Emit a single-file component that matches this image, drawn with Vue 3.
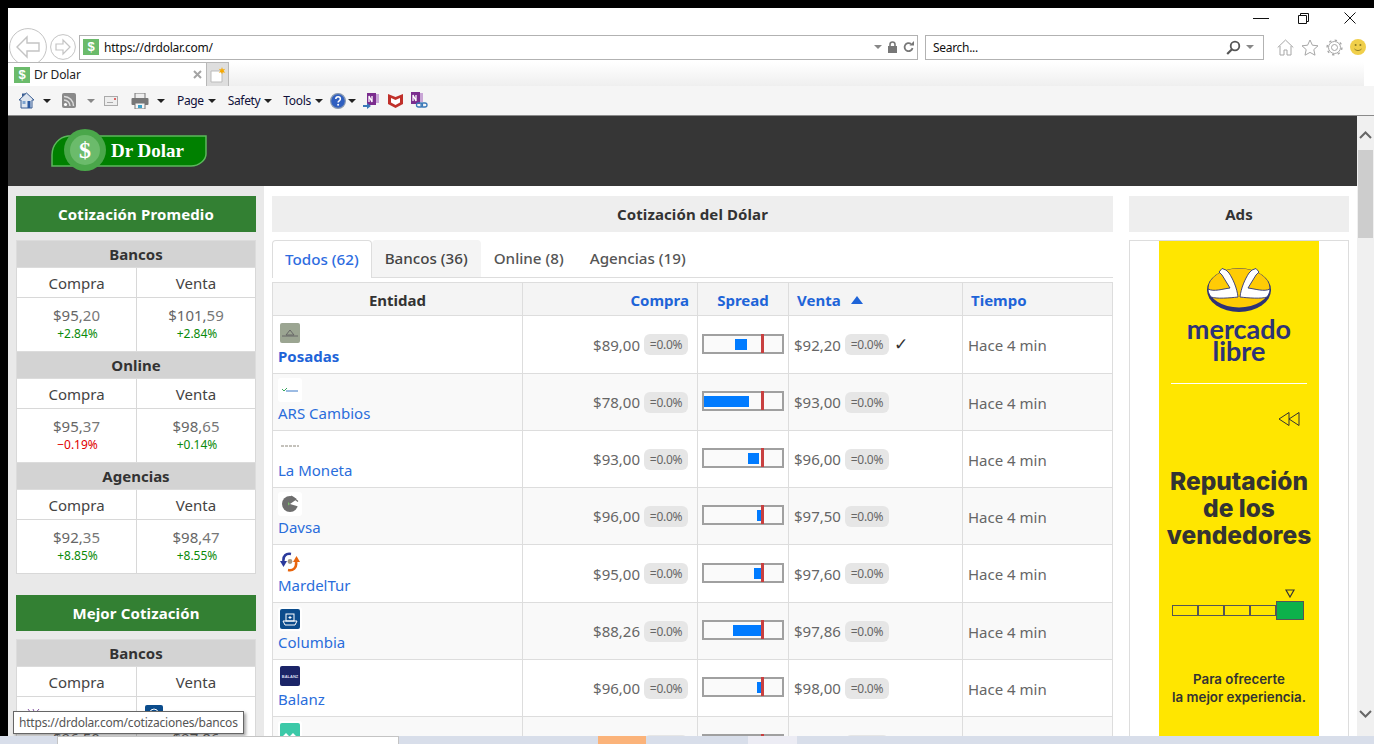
<template>
  <div class="screen">
    <div class="topbar"></div>
    <div class="desk">
      <div class="edge"></div>
      <div class="win">
        <!-- ventana del navegador -->
        <div class="titlebar">
          <span class="min"></span>
          <svg class="restore" width="11" height="11" viewBox="0 0 11 11"><path d="M2.5 2.5V.5h8v8h-2M.5 2.5h8v8h-8z" fill="#fff" stroke="#111"/></svg>
          <svg class="close" width="12" height="12" viewBox="0 0 12 12"><path d="M.5.5l11 11M11.5.5l-11 11" stroke="#111" fill="none"/></svg>
        </div>

        <div class="addr-row">
          <svg class="back" width="38" height="38" viewBox="0 0 38 38"><circle cx="19" cy="19" r="18.4" fill="#fff" stroke="#c4c4c4"/><path d="M8 19l10-10v6h12v8H18v6z" fill="#fff" stroke="#c4c4c4" stroke-width="1.4"/></svg>
          <svg class="fwd" width="26" height="26" viewBox="0 0 26 26"><circle cx="13" cy="13" r="12.4" fill="#fff" stroke="#c4c4c4"/><path d="M20 13l-7-7v4H6v6h7v4z" fill="#fff" stroke="#c4c4c4" stroke-width="1.2"/></svg>
          <div class="addr">
            <span class="fav">$</span>
            <span class="url">https://drdolar.com/</span>
            <i class="tri gray"></i>
            <svg width="11" height="12" viewBox="0 0 11 12"><path d="M3 5V3.5a2.5 2.5 0 015 0V5" fill="none" stroke="#777" stroke-width="1.6"/><rect x="1" y="5" width="9" height="7" fill="#777"/></svg>
            <svg width="11" height="12" viewBox="0 0 11 12"><path d="M9.5 7a4 4 0 11-1.4-4" fill="none" stroke="#777" stroke-width="1.8"/><path d="M6.5 4.5H11V0z" fill="#777"/></svg>
          </div>
          <div class="search">
            <span class="search-txt">Search...</span>
            <svg width="15" height="15" viewBox="0 0 15 15"><circle cx="9" cy="6" r="4.3" fill="none" stroke="#555" stroke-width="1.8"/><path d="M6 9.2L1.2 14" stroke="#555" stroke-width="2.2"/></svg>
            <i class="tri gray"></i>
          </div>
          <div class="ie-icons">
            <svg width="17" height="17" viewBox="0 0 17 17"><path d="M.7 8.5L8.5 1l7.8 7.5M3 7v9h4v-5h3v5h4V7" fill="none" stroke="#a6a6a6"/></svg>
            <svg width="18" height="17" viewBox="0 0 18 17"><path d="M9 1l2.4 5.2 5.6.6-4.2 3.8 1.2 5.6L9 13.4l-5 2.8 1.2-5.6L1 6.8l5.6-.6z" fill="none" stroke="#a6a6a6"/></svg>
            <svg width="17" height="17" viewBox="0 0 17 17"><circle cx="8.5" cy="8.5" r="3" fill="none" stroke="#a6a6a6"/><circle cx="8.5" cy="8.5" r="6" fill="none" stroke="#a6a6a6" stroke-width="1"/><circle cx="8.5" cy="8.5" r="7.4" fill="none" stroke="#a6a6a6" stroke-width="1.4" stroke-dasharray="2.4 3.4"/></svg>
            <svg width="16" height="16" viewBox="0 0 16 16"><circle cx="8" cy="8" r="8" fill="#f0cf4a"/><circle cx="5.6" cy="6" r="1" fill="#8a7a20"/><circle cx="10.4" cy="6" r="1" fill="#8a7a20"/><path d="M4.5 10c2 2 5 2 7 0" fill="none" stroke="#8a7a20"/></svg>
          </div>
        </div>

        <div class="tab-row">
          <div class="ie-tab">
            <span class="fav">$</span>
            <span class="ie-tab-name">Dr Dolar</span>
            <svg width="9" height="9" viewBox="0 0 9 9"><path d="M1 1l7 7M8 1L1 8" stroke="#a4a4a4" stroke-width="2"/></svg>
          </div>
          <div class="new-tab">
            <svg width="16" height="16" viewBox="0 0 16 16"><path d="M1 4h9l2 2v9H1z" fill="#fff" stroke="#bbb"/><path d="M12 0l.8 2.4 2.4-.6-1.6 2 1.6 2-2.4-.6-.8 2.4-.8-2.4-2.4.6 1.6-2-1.6-2 2.4.6z" fill="#f6a800"/></svg>
          </div>
        </div>

        <div class="cmd-bar">
          <svg class="c-home" width="17" height="17" viewBox="0 0 17 17"><path d="M1 8l7.5-7L16 8h-2v8H3V8z" fill="#dfe6ef" stroke="#3b5f94"/><path d="M8.5 1L4 5V1.5h2z" fill="#3b5f94"/><rect x="9.500" y="9" width="3" height="7" fill="#2c5aa0"/><rect x="4.500" y="9" width="3" height="3" fill="#7da3cf"/></svg>
          <i class="tri c1"></i>
          <svg class="c-rss" width="14" height="15" viewBox="0 0 14 15"><rect width="14" height="15" rx="2" fill="#8a8a8a"/><circle cx="3.500" cy="11.500" r="1.600" fill="#fff"/><path d="M2 7a6 6 0 016 6M2 3.500A9.500 9.500 0 0111.500 13" fill="none" stroke="#ddd" stroke-width="1.500"/></svg>
          <i class="tri c2 gray"></i>
          <svg class="c-mail" width="14" height="10" viewBox="0 0 14 10"><rect x=".5" y=".5" width="13" height="9" fill="#eee" stroke="#aaa"/><rect x="3" y="6" width="6" height="1" fill="#aaa"/><rect x="10" y="2" width="2" height="2" fill="#d66"/></svg>
          <svg class="c-print" width="18" height="16" viewBox="0 0 18 16"><rect x="4" y="0" width="10" height="6" fill="#eee" stroke="#777"/><rect x="0.500" y="5" width="17" height="7" rx="1" fill="#777"/><rect x="4" y="10" width="10" height="6" fill="#f4f4f4" stroke="#777"/><rect x="7" y="12" width="4" height="3" fill="#3aa0c8"/></svg>
          <i class="tri c3"></i>
          <span class="cmd-txt t-page">Page</span>
          <i class="tri c4"></i>
          <span class="cmd-txt t-safety">Safety</span>
          <i class="tri c4"></i>
          <span class="cmd-txt t-tools">Tools</span>
          <i class="tri c4"></i>
          <svg class="c-help" width="16" height="16" viewBox="0 0 16 16"><circle cx="8" cy="8" r="7.400" fill="#2f5fc0" stroke="#8a9ab0" stroke-width="1.200"/><path d="M5.800 6c0-3 4.600-3 4.600 0 0 1.800-2.300 1.800-2.300 3.400" fill="none" stroke="#fff" stroke-width="1.500"/><circle cx="8.100" cy="11.800" r="1" fill="#fff"/></svg>
          <i class="tri c5"></i>
          <svg class="c-on1" width="17" height="17" viewBox="0 0 17 17"><rect x="4" y="1" width="9" height="12" fill="#7b2d8e"/><rect x="13" y="2" width="3" height="9" fill="#c9a6d6"/><path d="M6 10V4l3 6V4" fill="none" stroke="#fff" stroke-width="1.300"/><path d="M0 13h4v-2l4 3-4 3v-2H0z" fill="#3a78b8"/></svg>
          <svg class="c-mc" width="15" height="15" viewBox="0 0 15 15"><path d="M0 1l7.500 3L15 1v10l-7.500 4L0 11z" fill="#c0302a"/><path d="M3 5l4.500 2L12 5v4.500L7.500 12 3 9.500z" fill="#fff"/></svg>
          <svg class="c-on2" width="17" height="17" viewBox="0 0 17 17"><rect x="0" y="0" width="9" height="12" fill="#7b2d8e"/><rect x="9" y="1" width="3" height="9" fill="#c9a6d6"/><path d="M2 9V3l3 6V3" fill="none" stroke="#fff" stroke-width="1.300"/><rect x="5.500" y="11" width="6" height="4" rx="2" fill="none" stroke="#3a78b8" stroke-width="1.300"/><rect x="10" y="11" width="6" height="4" rx="2" fill="none" stroke="#3a78b8" stroke-width="1.300"/></svg>
        </div>

        <!-- pagina -->
        <div class="viewport">
          <div class="page">
            <header class="site-head">
              <svg class="logo" width="156" height="44" viewBox="0 0 156 44">
                <path d="M1 37V26C1 16 8 8 17 7H155V25C155 31 148 37 140 37Z" fill="#008000" stroke="#5cb85c" stroke-width="1.500"/>
                <circle cx="34" cy="21" r="21" fill="#4aa74a"/>
                <circle cx="34" cy="21" r="15" fill="#6bbb6b"/>
                <text x="34" y="29" class="logo-s">$</text>
                <text x="60" y="28" class="logo-t">Dr Dolar</text>
              </svg>
            </header>

            <div class="body">
              <aside class="side">
                <div class="green-title">Cotización Promedio</div>
                <div class="side-table">
                  <template v-for="g in promedio" :key="g.name">
                    <div class="st-head">{{ g.name }}</div>
                    <div class="st-label">Compra</div>
                    <div class="st-label">Venta</div>
                    <div class="st-val" v-for="c in g.vals" :key="c.p">
                      <span>{{ c.p }}<em>{{ c.d }}</em></span>
                      <small :class="c.neg ? 'neg' : 'pos'">{{ c.pct }}</small>
                    </div>
                  </template>
                </div>

                <div class="green-title mejor">Mejor Cotización</div>
                <div class="side-table">
                  <div class="st-head">Bancos</div>
                  <div class="st-label">Compra</div>
                  <div class="st-label">Venta</div>
                  <div class="st-best">
                    <span class="mini white"><svg width="18" height="18" viewBox="0 0 18 18"><path d="M3 4l5 7M8 4l3 7M14 4l-6 7" stroke="#8a5aa8" fill="none"/></svg></span>
                    <span class="price">$96,50</span>
                  </div>
                  <div class="st-best">
                    <span class="mini blue"><svg width="18" height="18" viewBox="0 0 18 18"><circle cx="9" cy="8" r="4" fill="none" stroke="#fff"/></svg></span>
                    <span class="price">$97,86</span>
                  </div>
                </div>
              </aside>

              <main class="center">
                <div class="gray-title">Cotización del Dólar</div>
                <nav class="tabs">
                  <a class="tab active">Todos (62)</a>
                  <a class="tab soft">Bancos (36)</a>
                  <a class="tab">Online (8)</a>
                  <a class="tab">Agencias (19)</a>
                </nav>

                <div class="table">
                  <div class="row head">
                    <div class="cell c-ent">Entidad</div>
                    <div class="cell c-right link">Compra</div>
                    <div class="cell c-mid link">Spread</div>
                    <div class="cell c-venta-h link">Venta <i class="sort"></i></div>
                    <div class="cell c-time-h link">Tiempo</div>
                  </div>
                  <div class="row" v-for="(r, i) in rows" :key="r.name" :class="{ tall: r.tall, alt: i % 2 }">
                    <div class="cell entity">
                      <span class="ent-logo">
                        <svg v-if="r.logo === 'posadas'" width="20" height="20" viewBox="0 0 20 20"><rect width="20" height="20" rx="2" fill="#9ba592"/><path d="M6 12l4-5 4 5z" fill="none" stroke="#666"/><path d="M2 13h16" stroke="#666"/></svg>
                        <svg v-else-if="r.logo === 'ars'" width="20" height="20" viewBox="0 0 20 20"><path d="M2 9l2 2 3-3" fill="none" stroke="#3aa860"/><path d="M6 11h12" stroke="#3a78c8"/></svg>
                        <svg v-else-if="r.logo === 'moneta'" width="20" height="20" viewBox="0 0 20 20"><path d="M1 9h18" stroke="#8a8578" stroke-dasharray="3 1"/></svg>
                        <svg v-else-if="r.logo === 'davsa'" width="20" height="20" viewBox="0 0 20 20"><circle cx="10" cy="10" r="8" fill="#6e6e6e"/><path d="M10 10L20 3v10z" fill="#fff"/><path d="M11 2l7 5.500" stroke="#6e6e6e" stroke-width="1.200"/><path d="M8 8l2 2-2 1.500z" fill="#7bbb6b"/></svg>
                        <svg v-else-if="r.logo === 'mardel'" width="20" height="20" viewBox="0 0 20 20"><path d="M11 2C6 1 3 4 3.500 9" fill="none" stroke="#2b3a9c" stroke-width="2.600"/><path d="M0 9h7l-3.500 6z" fill="#2b3a9c"/><path d="M8 18c5 1 9-2 8-8" fill="none" stroke="#e8640c" stroke-width="2.600"/><path d="M13 10h7l-3.500-6z" fill="#e8640c"/><circle cx="10" cy="9.500" r="2.400" fill="#a89880"/></svg>
                        <svg v-else-if="r.logo === 'columbia'" width="20" height="20" viewBox="0 0 20 20"><rect width="20" height="20" rx="2" fill="#0b4c8c"/><rect x="6" y="5" width="8" height="7" fill="none" stroke="#fff"/><path d="M3 12h14l-2 4H5z" fill="none" stroke="#fff"/><path d="M10 7v3M8.500 8.500h3" stroke="#fff"/></svg>
                        <svg v-else-if="r.logo === 'balanz'" width="20" height="20" viewBox="0 0 20 20"><rect width="20" height="20" rx="2" fill="#1b2467"/><text x="10" y="11.500" class="bz">BALANZ</text></svg>
                        <svg v-else width="20" height="20" viewBox="0 0 20 20"><rect width="20" height="20" rx="2" fill="#3cc9a8"/><path d="M6 10l3 3-3 3-3-3zM13 10l3 3-3 3-3-3z" fill="#fff"/></svg>
                      </span>
                      <a class="ent-name" :class="{ bold: r.bold }">{{ r.name }}</a>
                    </div>
                    <div class="cell c-right c-compra price-cell">
                      <span class="price">{{ r.compra }}</span><span class="chip">=0.0%</span>
                    </div>
                    <div class="cell c-spread">
                      <div class="bar">
                        <span class="fill" :style="{ left: r.from + 'px', width: r.w + 'px' }"></span>
                        <span class="mark"></span>
                      </div>
                    </div>
                    <div class="cell price-cell c-venta">
                      <span class="price">{{ r.venta }}</span><span class="chip">=0.0%</span>
                      <span v-if="r.best" class="check">✓</span>
                    </div>
                    <div class="cell c-time">Hace 4 min</div>
                  </div>
                </div>
              </main>

              <aside class="ads">
                <div class="gray-title">Ads</div>
                <div class="ad-box">
                  <div class="ad">
                    <svg class="ml-logo" width="66" height="48" viewBox="0 0 66 48">
                      <ellipse cx="33" cy="25" rx="32" ry="22" fill="#2d3277"/>
                      <ellipse cx="33" cy="23" rx="30.500" ry="19.500" fill="#ffcb05"/>
                      <g fill="#fff" stroke="#2d3277" stroke-width=".9">
                        <path d="M2 24C8 27 16 24 24 23L16 10 13 7 16 3.500 20 5 23 8C27 14 31 23 32 32 24 33 10 34 5 32 3 29 2 27 2 24Z"/>
                        <path d="M64 24C58 27 50 24 42 23L50 10 53 7 50 3.500 46 5 43 8C39 14 35 23 34 32 42 33 56 34 61 32 63 29 64 27 64 24Z"/>
                      </g>
                    </svg>
                    <div class="ml-word">mercado<br>libre</div>
                    <div class="ad-line"></div>
                    <svg class="rewind" width="22" height="14" viewBox="0 0 22 14"><path d="M1 7l10-6.500v13zM11 7l10-6.500v13z" fill="none" stroke="#333"/></svg>
                    <div class="ad-title">Reputación<br>de los<br>vendedores</div>
                    <svg class="pin" width="10" height="9" viewBox="0 0 10 9"><path d="M1 1h8L5 8z" fill="none" stroke="#333" stroke-width="1.200"/></svg>
                    <div class="scale">
                      <span class="seg"></span><span class="seg"></span><span class="seg"></span><span class="seg"></span><span class="seg on"></span>
                    </div>
                    <div class="ad-foot">Para ofrecerte<br>la mejor experiencia.</div>
                  </div>
                </div>
              </aside>
            </div>
          </div>

          <div class="scroll">
            <svg class="sc-up" width="13" height="8" viewBox="0 0 13 8"><path d="M1 7l5.500-5.500L12 7" fill="none" stroke="#666" stroke-width="2"/></svg>
            <div class="thumb"></div>
            <svg class="sc-down" width="13" height="8" viewBox="0 0 13 8"><path d="M1 1l5.500 5.500L12 1" fill="none" stroke="#666" stroke-width="2"/></svg>
          </div>

          <div class="tooltip">https://drdolar.com/cotizaciones/bancos</div>
        </div>
      </div>
    </div>

    <div class="taskbar">
      <span class="tb-white"></span>
      <span class="tb-orange"></span>
      <span class="tb-light"></span>
      <span class="tb-clock">17:55</span>
    </div>
  </div>
</template>

<script setup>
const promedio = [
  { name: 'Bancos', vals: [
    { p: '$95,', d: '20', pct: '+2.84%' },
    { p: '$101,', d: '59', pct: '+2.84%' }
  ] },
  { name: 'Online', vals: [
    { p: '$95,', d: '37', pct: '−0.19%', neg: true },
    { p: '$98,', d: '65', pct: '+0.14%' }
  ] },
  { name: 'Agencias', vals: [
    { p: '$92,', d: '35', pct: '+8.85%' },
    { p: '$98,', d: '47', pct: '+8.55%' }
  ] }
]

const rows = [
  { name: 'Posadas', logo: 'posadas', bold: true, best: true, tall: true, compra: '$89,00', venta: '$92,20', from: 31, w: 12 },
  { name: 'ARS Cambios', logo: 'ars', compra: '$78,00', venta: '$93,00', from: 0, w: 45 },
  { name: 'La Moneta', logo: 'moneta', compra: '$93,00', venta: '$96,00', from: 44, w: 11 },
  { name: 'Davsa', logo: 'davsa', compra: '$96,00', venta: '$97,50', from: 53, w: 6 },
  { name: 'MardelTur', logo: 'mardel', tall: true, compra: '$95,00', venta: '$97,60', from: 50, w: 9 },
  { name: 'Columbia', logo: 'columbia', compra: '$88,26', venta: '$97,86', from: 29, w: 30 },
  { name: 'Balanz', logo: 'balanz', compra: '$96,00', venta: '$98,00', from: 53, w: 6 },
  { name: 'Cambio', logo: 'teal', compra: '$96,50', venta: '$98,20', from: 50, w: 9 }
]
</script>

<style>
html, body { margin: 0; background: #fff; overflow: hidden; }
</style>

<style scoped>
.screen {
  width: 1382px;
  height: 744px;
  overflow: hidden;
  background: #fff;
  font-family: "Noto Sans", "Open Sans", sans-serif;
  color: #444;
}
.topbar { height: 8px; width: 1374px; background: #000; }
.desk { display: flex; height: 728px; }
.edge { width: 8px; background: #000; }
.win { width: 1366px; display: flex; flex-direction: column; position: relative; }

/* navegador */
.titlebar { height: 26px; display: flex; align-items: center; background: #fff; padding: 0 0 6px 1245px; box-sizing: border-box; }
.min { width: 16px; height: 1px; background: #111; margin-top: 1px; }
.restore { margin-left: 29px; }
.close { margin-left: 35px; }

.addr-row { height: 28px; display: flex; align-items: center; position: relative; padding-left: 71px; }
.back { position: absolute; left: 1px; top: -6px; }
.fwd { position: absolute; left: 42px; top: 0; }
.addr, .search {
  height: 25px;
  box-sizing: border-box;
  border: 1px solid #b2b2b2;
  display: flex;
  align-items: center;
  font-size: 12px;
  color: #111;
  margin-top: -2px;
}
.addr { width: 839px; padding-left: 3px; gap: 5px; }
.fav {
  width: 16px;
  height: 16px;
  background: #6bbb6b;
  color: #fff;
  font-size: 13px;
  font-weight: 700;
  text-align: center;
  line-height: 16px;
  flex-shrink: 0;
  font-family: "Liberation Sans", sans-serif;
}
.url { flex: 1; letter-spacing: -.2px; }
.addr svg:last-child { margin-right: 3px; }
.search { width: 339px; margin-left: 7px; padding: 0 9px 0 7px; gap: 5px; }
.search-txt { flex: 1; letter-spacing: -.3px; }
.ie-icons { display: flex; align-items: center; gap: 7px; margin-left: 13px; margin-top: -2px; }
.tri {
  display: inline-block;
  width: 0;
  height: 0;
  border-left: 4px solid transparent;
  border-right: 4px solid transparent;
  border-top: 4px solid #222;
}
.tri.gray { border-top-color: #888; }

.tab-row {
  height: 24px;
  display: flex;
  background: linear-gradient(#fff, #efefef);
  margin-right: 10px;
}
.ie-tab {
  width: 199px;
  box-sizing: border-box;
  border-top: 1px solid #b8b8b8;
  border-right: 1px solid #b8b8b8;
  background: #fff;
  display: flex;
  align-items: center;
  padding: 0 4px 0 6px;
  font-size: 12px;
  color: #222;
  gap: 4px;
  position: relative;
  z-index: 1;
}
.ie-tab-name { flex: 1; letter-spacing: -.1px; }
.new-tab {
  width: 22px;
  box-sizing: border-box;
  background: #dedede;
  border-top: 1px solid #b8b8b8;
  border-right: 1px solid #b8b8b8;
  display: flex;
  align-items: center;
  justify-content: center;
}

.cmd-bar {
  height: 30px;
  box-sizing: border-box;
  background: #f5f5f5;
  border-bottom: 1px solid #8a8a8a;
  display: flex;
  align-items: center;
  padding-left: 10px;
}
.cmd-txt { font-size: 12px; color: #10103a; letter-spacing: -.35px; }
.c1 { margin-left: 8px; }
.c-rss { margin-left: 11px; }
.c2 { margin-left: 11px; }
.c-mail { margin-left: 9px; }
.c-print { margin-left: 13px; }
.c3 { margin-left: 8px; }
.t-page { margin-left: 12px; }
.c4 { margin-left: 4px; }
.t-safety { margin-left: 12px; }
.t-tools { margin-left: 11px; }
.c-help { margin-left: 7px; }
.c5 { margin-left: 2px; }
.c-on1 { margin-left: 7px; }
.c-mc { margin-left: 8px; }
.c-on2 { margin-left: 8px; }

.viewport { flex: 1; display: flex; overflow: hidden; position: relative; min-height: 0; }
.page { width: 1349px; overflow: hidden; }
.site-head { height: 70px; background: #363636; box-sizing: border-box; padding: 13px 0 0 43px; }
.logo { display: block; }
.logo-s { font: 700 24px "Liberation Serif", serif; fill: #fff; text-anchor: middle; }
.logo-t { font: 700 19px "Liberation Serif", serif; fill: #fff; }
.bz { font: 700 4px "Liberation Sans", sans-serif; fill: #d8dcf0; text-anchor: middle; }

.body { display: flex; }
.side { width: 256px; flex-shrink: 0; box-sizing: border-box; background: #e9e9e9; padding: 10px 8px 0; height: 560px; }
.green-title {
  height: 36px;
  background: #338033;
  color: #fff;
  font-size: 15px;
  font-weight: 700;
  letter-spacing: .12px;
  display: flex;
  align-items: center;
  justify-content: center;
  margin-bottom: 8px;
}
.mejor { margin-top: 21px; }
.side-table {
  display: grid;
  grid-template-columns: 121px 119px;
  grid-auto-rows: min-content;
  box-sizing: border-box;
  border-bottom: 1px solid #d8d8d8;
}
.st-head {
  grid-column: 1 / 3;
  height: 28px;
  box-sizing: border-box;
  background: #d3d3d3;
  border: 1px solid #dcdcdc;
  font-size: 15px;
  font-weight: 700;
  color: #333;
  display: flex;
  align-items: center;
  justify-content: center;
}
.st-label {
  height: 30px;
  box-sizing: border-box;
  background: #fff;
  border: 1px solid #d8d8d8;
  border-width: 0 1px 1px 1px;
  font-size: 15px;
  color: #444;
  display: flex;
  align-items: center;
  justify-content: center;
}
.st-label + .st-label { border-left: 0; }
.st-val {
  height: 53px;
  box-sizing: border-box;
  background: #fff;
  border: 1px solid #d8d8d8;
  border-width: 0 1px 0 1px;
  display: flex;
  flex-direction: column;
  align-items: center;
  justify-content: center;
  padding-bottom: 3px;
  font-size: 15px;
  color: #666;
  line-height: 22px;
}
.st-val + .st-val { border-left: 0; }
.st-val em { font-style: normal; color: #777; }
.st-val small { font-size: 12px; line-height: 16px; padding-left: 2px; }
.pos { color: #0a8a0a; }
.neg { color: #e00000; }
.st-best {
  height: 60px;
  box-sizing: border-box;
  background: #fff;
  border: 1px solid #d8d8d8;
  border-width: 0 1px;
  padding: 6px 6px 0;
  font-size: 15px;
  color: #666;
  display: flex;
  flex-direction: column;
}
.st-best .price { align-self: center; line-height: 20px; margin-top: 3px; }
.st-best + .st-best { border-left: 0; }
.mini { width: 22px; height: 22px; border-radius: 3px; display: flex; align-items: center; justify-content: center; background: #fff; }
.mini.blue svg { background: #0b4c8c; border-radius: 2px; }

.center { width: 841px; flex-shrink: 0; margin: 10px 0 0 8px; }
.gray-title {
  height: 36px;
  background: #eee;
  color: #333;
  font-size: 15px;
  font-weight: 700;
  letter-spacing: .1px;
  display: flex;
  align-items: center;
  justify-content: center;
  margin-bottom: 8px;
}
.tabs { display: flex; height: 38px; box-sizing: border-box; border-bottom: 1px solid #ddd; margin-bottom: 4px; }
.tab {
  box-sizing: border-box;
  height: 37px;
  padding: 0 12px 2px;
  font-size: 15.2px;
  font-weight: 500;
  color: #555;
  display: flex;
  align-items: center;
  border: 1px solid transparent;
  border-bottom: 0;
}
.tab.active { color: #2d6cdf; background: #fff; border-color: #ddd; border-radius: 4px 4px 0 0; height: 38px; }
.tab.soft { background: #f4f4f4; border-radius: 4px 4px 0 0; color: #444; }

.table { border-top: 1px solid #ddd; }
.row {
  display: grid;
  grid-template-columns: 251px 175px 91px 174px 150px;
  height: 57px;
  border-bottom: 1px solid #ddd;
  box-sizing: border-box;
  background: #fff;
}
.row.tall { height: 58px; }
.row.alt { background: #f9f9f9; }
.row.head {
  height: 33px;
  background: #f4f4f4;
  font-size: 15px;
  font-weight: 700;
  color: #333;
}
.row.head .cell { padding-top: 1px; }
.cell {
  border-right: 1px solid #ddd;
  box-sizing: border-box;
  min-width: 0;
  display: flex;
  align-items: center;
}
.cell:first-child { border-left: 1px solid #ddd; }
.link { color: #1e64d8; }
.c-ent { justify-content: center; }
.c-right { justify-content: flex-end; padding-right: 8px; }
.c-compra { padding-right: 9px; }
.c-mid { justify-content: center; }
.c-venta-h { padding-left: 8px; gap: 10px; }
.c-time-h { padding-left: 8px; }
.sort {
  display: inline-block;
  width: 0;
  height: 0;
  border-left: 6px solid transparent;
  border-right: 6px solid transparent;
  border-bottom: 8px solid #1e64d8;
}
.entity { flex-direction: column; align-items: flex-start; justify-content: center; padding: 0 0 2px 5px; }
.ent-logo {
  width: 24px;
  height: 24px;
  background: #fff;
  border-radius: 3px;
  display: flex;
  align-items: center;
  justify-content: center;
}
.ent-name { font-size: 15px; color: #2a6ddb; line-height: 22px; }
.ent-name.bold { font-weight: 700; color: #1e64d8; }
.price { font-size: 15px; color: #666; }
.price-cell { gap: 4px; }
.chip {
  background: #e6e6e6;
  border-radius: 6px;
  height: 21px;
  width: 44px;
  font-size: 12px;
  color: #666;
  display: flex;
  align-items: center;
  justify-content: center;
  letter-spacing: -.3px;
}
.c-spread { padding: 0 0 2px 4px; }
.bar {
  width: 82px;
  height: 20px;
  box-sizing: border-box;
  border: 2px solid #a0a0a0;
  background: #fafafa;
  position: relative;
}
.fill { position: absolute; top: 3px; height: 11px; background: #007bff; }
.mark { position: absolute; left: 57px; top: -2px; bottom: -1px; width: 3px; background: #c84040; }
.c-venta { padding-left: 5px; }
.check { font: 700 17px "DejaVu Sans", sans-serif; color: #333; margin: -2px 0 0 1px; }
.c-time { padding: 1px 0 0 5px; font-size: 15px; color: #666; }

.ads { width: 220px; flex-shrink: 0; margin: 10px 0 0 16px; }
.ad-box { border: 1px solid #ddd; border-bottom: 0; display: flex; justify-content: center; height: 500px; box-sizing: border-box; }
.ad {
  width: 160px;
  background: #ffe600;
  color: #333;
  display: flex;
  flex-direction: column;
  align-items: center;
  font-family: "Inter", sans-serif;
}
.ml-logo { margin-top: 24px; flex-shrink: 0; }
.ml-word { color: #2d3277; font-family: "Lato", sans-serif; font-size: 27px; font-weight: 700; line-height: 22px; text-align: center; margin-top: 5px; }
.ad-line { width: 136px; height: 1px; background: #fff; margin-top: 21px; flex-shrink: 0; }
.rewind { align-self: flex-end; margin: 28px 19px 0 0; flex-shrink: 0; }
.ad-title { font-size: 24.5px; font-weight: 800; line-height: 27px; text-align: center; margin-top: 42px; }
.pin { align-self: flex-end; margin: 40px 24px 0 0; flex-shrink: 0; }
.scale { display: flex; align-items: center; margin-top: 3px; margin-left: -3px; }
.seg { width: 26px; height: 11px; box-sizing: border-box; border: 1px solid #555; margin-right: 0; }
.seg.on { width: 28px; height: 19px; background: #0db14b; }
.ad-foot { font-size: 13.3px; font-weight: 600; line-height: 18px; text-align: center; margin-top: 50px; }

.scroll {
  width: 17px;
  background: #f0f0f0;
  display: flex;
  flex-direction: column;
  align-items: center;
  flex-shrink: 0;
}
.sc-up { margin-top: 15px; }
.thumb { width: 15px; height: 88px; background: #cdcdcd; margin-top: 11px; }
.sc-down { margin-top: auto; margin-bottom: 18px; }

.tooltip {
  position: absolute;
  left: 5px;
  top: 595px;
  box-sizing: border-box;
  height: 23px;
  width: 231px;
  background: #fff;
  border: 1px solid #666;
  box-shadow: 2px 2px 3px rgba(0, 0, 0, .35);
  font-size: 12px;
  color: #555;
  display: flex;
  align-items: center;
  padding-left: 5px;
  white-space: nowrap;
  letter-spacing: -.2px;
}

.taskbar { height: 8px; width: 1374px; background: #d8deea; position: relative; display: flex; font-size: 11px; }
.tb-white { width: 342px; margin-left: 57px; background: #fff; border: 1px solid #c4c4c4; border-bottom: 0; box-sizing: border-box; }
.tb-orange { width: 48px; margin-left: 199px; background: #fbb37a; }
.tb-light { width: 49px; margin-left: 102px; background: #ececf4; }
.tb-clock { margin: 5px 0 0 475px; color: #222; line-height: 16px; }
</style>
